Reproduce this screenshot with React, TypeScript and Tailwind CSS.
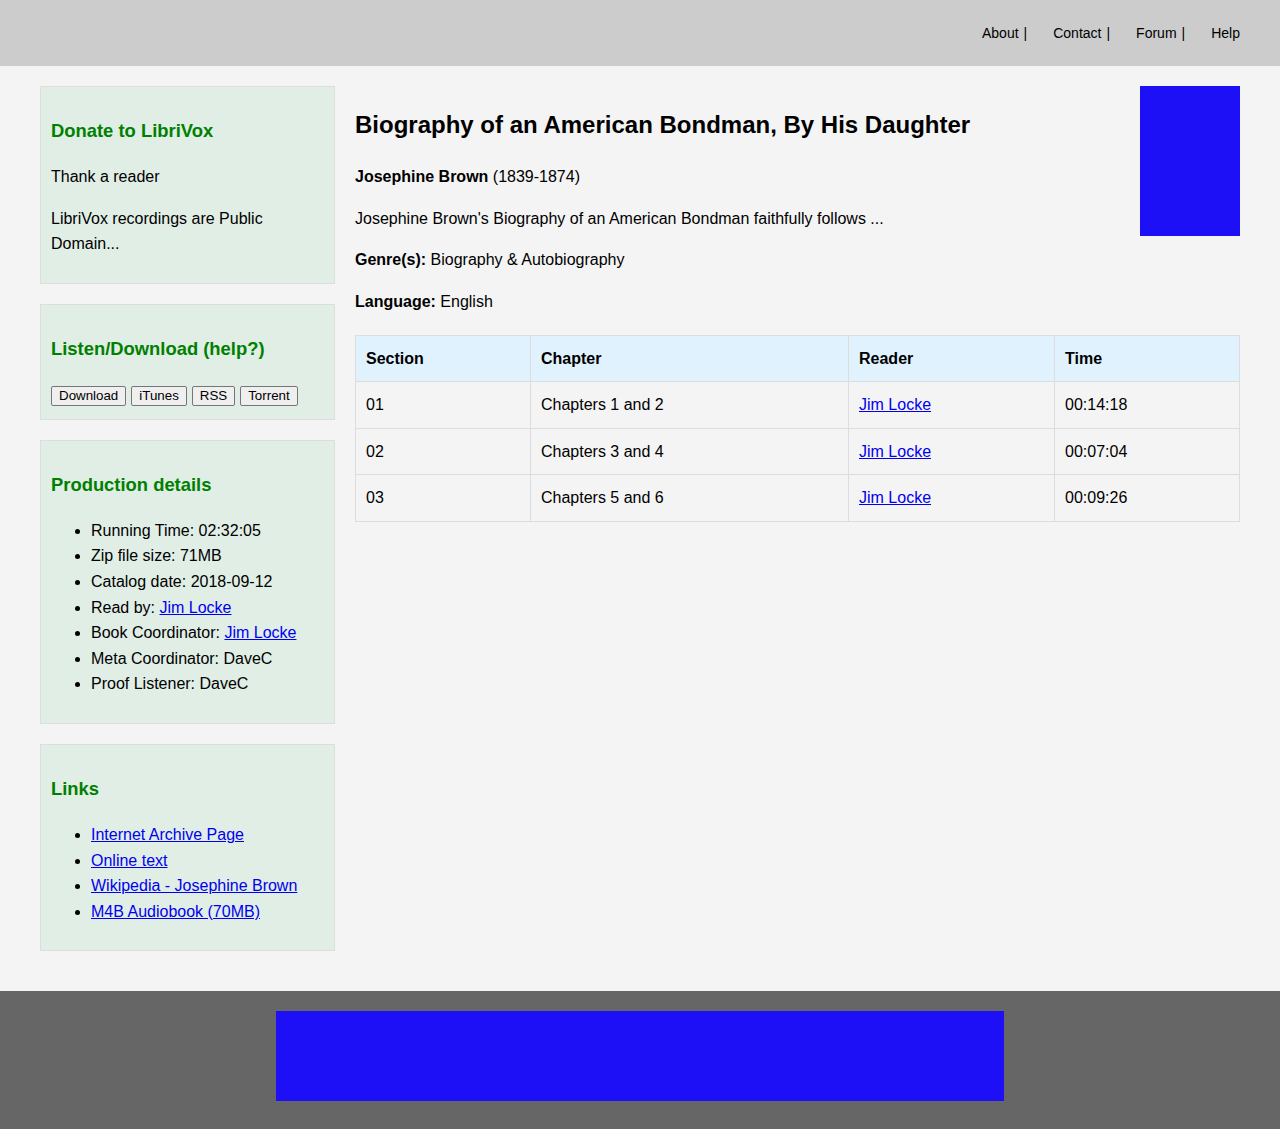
import React from "react";

const rows = [
  { section: "01", chapter: "Chapters 1 and 2", reader: "Jim Locke", time: "00:14:18" },
  { section: "02", chapter: "Chapters 3 and 4", reader: "Jim Locke", time: "00:07:04" },
  { section: "03", chapter: "Chapters 5 and 6", reader: "Jim Locke", time: "00:09:26" },
];

function Box({ title, children }: { title: string; children: React.ReactNode }) {
  return (
    <div className="border border-[#dddddd] bg-[#e0eee6] p-[10px]">
      <h3 className="my-[18.72px] text-[18.4px] font-bold leading-[29.6px] text-[#008000]">{title}</h3>
      {children}
    </div>
  );
}

function Link({ children }: { children: React.ReactNode }) {
  return (
    <a href="#" className="text-[#0000ee] underline">
      {children}
    </a>
  );
}

function NavItem({ label, bar }: { label: string; bar?: boolean }) {
  return (
    <span>
      <a href="#">{label}</a>
      {bar && <span className="ml-[5px]">|</span>}
    </span>
  );
}

export default function App() {
  return (
    <div className="min-h-screen bg-[#f4f4f4] font-['Liberation_Sans',Arial,sans-serif] text-[16px] leading-[1.6] text-black">
      <header className="flex h-[66px] items-center justify-end bg-[#cccccc] px-10">
        <nav className="flex gap-[26px] text-[14px]">
          <NavItem label="About" bar />
          <NavItem label="Contact" bar />
          <NavItem label="Forum" bar />
          <NavItem label="Help" />
        </nav>
      </header>

      <div className="flex gap-5 px-10 pt-5 pb-10">
        {/* sidebar */}
        <aside className="flex w-[295px] shrink-0 flex-col gap-5">
          <Box title="Donate to LibriVox">
            <p className="mb-4">Thank a reader</p>
            <p className="mb-4">LibriVox recordings are Public Domain...</p>
          </Box>

          <Box title="Listen/Download (help?)">
            <div className="flex gap-[5px] pt-[4px] pb-[3px]">
              {["Download", "iTunes", "RSS", "Torrent"].map((b) => (
                <button
                  key={b}
                  className="rounded-[2px] border border-[#767676] bg-[#efefef] px-[7px] text-[13.33px] leading-[18px]"
                >
                  {b}
                </button>
              ))}
            </div>
          </Box>

          <Box title="Production details">
            <ul className="mb-4 list-disc pl-10">
              <li>Running Time: 02:32:05</li>
              <li>Zip file size: 71MB</li>
              <li>Catalog date: 2018-09-12</li>
              <li>
                Read by: <Link>Jim Locke</Link>
              </li>
              <li>
                Book Coordinator: <Link>Jim Locke</Link>
              </li>
              <li>Meta Coordinator: DaveC</li>
              <li>Proof Listener: DaveC</li>
            </ul>
          </Box>

          <Box title="Links">
            <ul className="mb-4 list-disc pl-10">
              <li>
                <Link>Internet Archive Page</Link>
              </li>
              <li>
                <Link>Online text</Link>
              </li>
              <li>
                <Link>Wikipedia - Josephine Brown</Link>
              </li>
              <li>
                <Link>M4B Audiobook (70MB)</Link>
              </li>
            </ul>
          </Box>
        </aside>

        {/* main */}
        <main className="min-w-0 flex-1">
          <div className="float-right ml-5 h-[150px] w-[100px] bg-[#1d10f7]" />
          <h2 className="my-[19.92px] text-[24px] font-bold leading-[1.6]">
            Biography of an American Bondman, By His Daughter
          </h2>
          <p className="mb-4">
            <b>Josephine Brown</b> (1839-1874)
          </p>
          <p className="mb-4">
            Josephine Brown's Biography of an American Bondman faithfully follows ...
          </p>
          <p className="mb-4">
            <b>Genre(s):</b> Biography &amp; Autobiography
          </p>
          <p>
            <b>Language:</b> English
          </p>

          <table className="clear-both mt-5 w-full border-collapse">
            <thead>
              <tr className="bg-[#e0f2fe] text-left">
                <th className="w-[175px] border border-[#dddddd] p-[10px] font-bold">Section</th>
                <th className="w-[318px] border border-[#dddddd] p-[10px] font-bold">Chapter</th>
                <th className="w-[206px] border border-[#dddddd] p-[10px] font-bold">Reader</th>
                <th className="border border-[#dddddd] p-[10px] font-bold">Time</th>
              </tr>
            </thead>
            <tbody>
              {rows.map((r) => (
                <tr key={r.section}>
                  <td className="border border-[#dddddd] p-[10px]">{r.section}</td>
                  <td className="border border-[#dddddd] p-[10px]">{r.chapter}</td>
                  <td className="border border-[#dddddd] p-[10px]">
                    <Link>{r.reader}</Link>
                  </td>
                  <td className="border border-[#dddddd] p-[10px]">{r.time}</td>
                </tr>
              ))}
            </tbody>
          </table>
        </main>
      </div>

      <footer className="flex justify-center bg-[#666666] pt-5 pb-7">
        <div className="h-[90px] w-[728px] bg-[#1d10f7]" />
      </footer>
    </div>
  );
}
